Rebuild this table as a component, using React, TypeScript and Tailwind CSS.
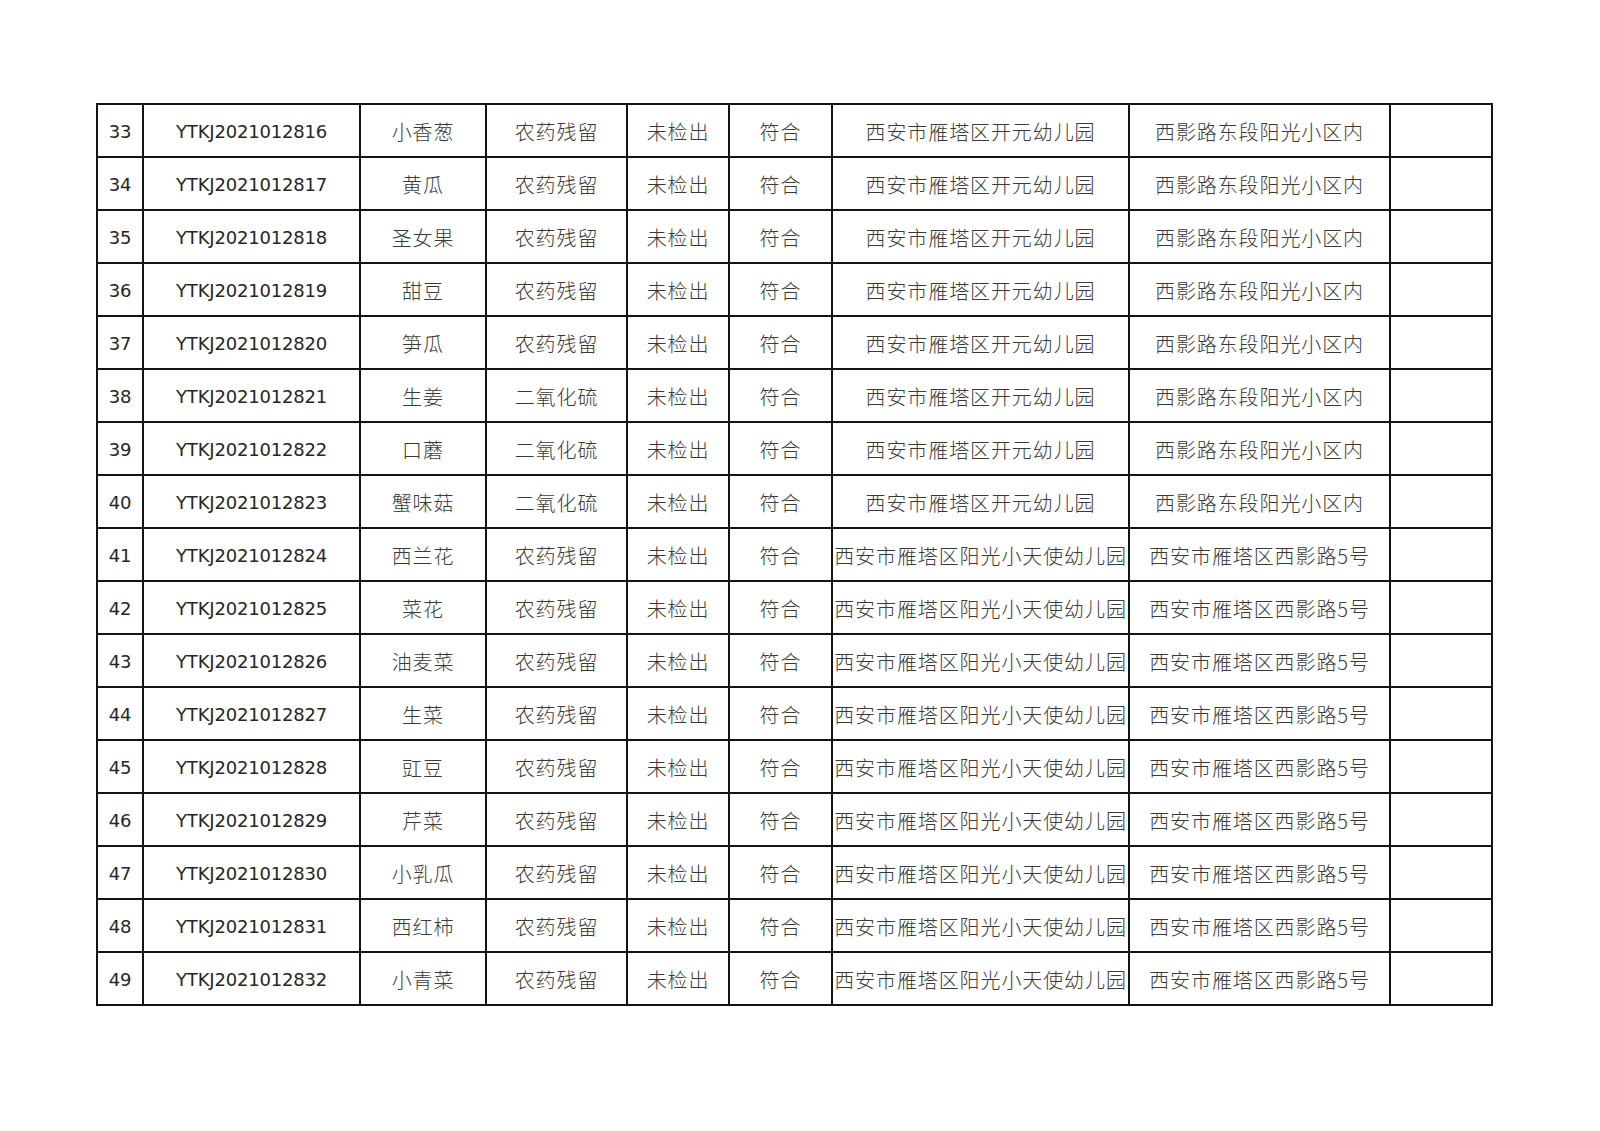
import React from "react"

type Row = {
  no: number
  code: string
  name: string
  item: string
  result: string
  verdict: string
  unit: string
  address: string
}

const kaiyuan = { unit: "西安市雁塔区开元幼儿园", address: "西影路东段阳光小区内" }
const angel = { unit: "西安市雁塔区阳光小天使幼儿园", address: "西安市雁塔区西影路5号" }

const samples: [string, string, typeof kaiyuan][] = [
  ["小香葱", "农药残留", kaiyuan],
  ["黄瓜", "农药残留", kaiyuan],
  ["圣女果", "农药残留", kaiyuan],
  ["甜豆", "农药残留", kaiyuan],
  ["笋瓜", "农药残留", kaiyuan],
  ["生姜", "二氧化硫", kaiyuan],
  ["口蘑", "二氧化硫", kaiyuan],
  ["蟹味菇", "二氧化硫", kaiyuan],
  ["西兰花", "农药残留", angel],
  ["菜花", "农药残留", angel],
  ["油麦菜", "农药残留", angel],
  ["生菜", "农药残留", angel],
  ["豇豆", "农药残留", angel],
  ["芹菜", "农药残留", angel],
  ["小乳瓜", "农药残留", angel],
  ["西红柿", "农药残留", angel],
  ["小青菜", "农药残留", angel],
]

const rows: Row[] = samples.map(([name, item, place], i) => ({
  no: 33 + i,
  code: `YTKJ20210128${16 + i}`,
  name,
  item,
  result: "未检出",
  verdict: "符合",
  unit: place.unit,
  address: place.address,
}))

const widths = [46, 217, 126, 141, 102, 103, 297, 261, 102]

const cell = "border-r-2 border-b-2 border-[#141414] text-center p-0 pt-[2px]"
const latin = "font-['DejaVu_Sans',sans-serif] text-[18px] tracking-[-0.2px] text-[#262626]"
const cjk = "font-['Noto_Sans_CJK_SC',sans-serif] text-[20px] font-light tracking-[0.9px] text-[#3a3a3a]"

export default function App() {
  return (
    <div className="w-[1600px] h-[1131px] bg-white pt-[103px] pl-[96px]">
      <table className="table-fixed border-separate border-spacing-0 border-l-2 border-t-2 border-[#141414] w-[1397px]">
        <colgroup>
          {widths.map((w, i) => (
            <col key={i} style={{ width: w }} />
          ))}
        </colgroup>
        <tbody>
          {rows.map((r) => (
            <tr key={r.no} className="h-[53px]">
              <td className={`${cell} ${latin}`}>{r.no}</td>
              <td className={`${cell} ${latin}`}>{r.code}</td>
              <td className={`${cell} ${cjk}`}>{r.name}</td>
              <td className={`${cell} ${cjk}`}>{r.item}</td>
              <td className={`${cell} ${cjk}`}>{r.result}</td>
              <td className={`${cell} ${cjk}`}>{r.verdict}</td>
              <td className={`${cell} whitespace-nowrap overflow-hidden ${cjk}`}>{r.unit}</td>
              <td className={`${cell} whitespace-nowrap ${cjk}`}>{r.address}</td>
              <td className="border-r-2 border-b-2 border-[#141414] p-0"></td>
            </tr>
          ))}
        </tbody>
      </table>
    </div>
  )
}
